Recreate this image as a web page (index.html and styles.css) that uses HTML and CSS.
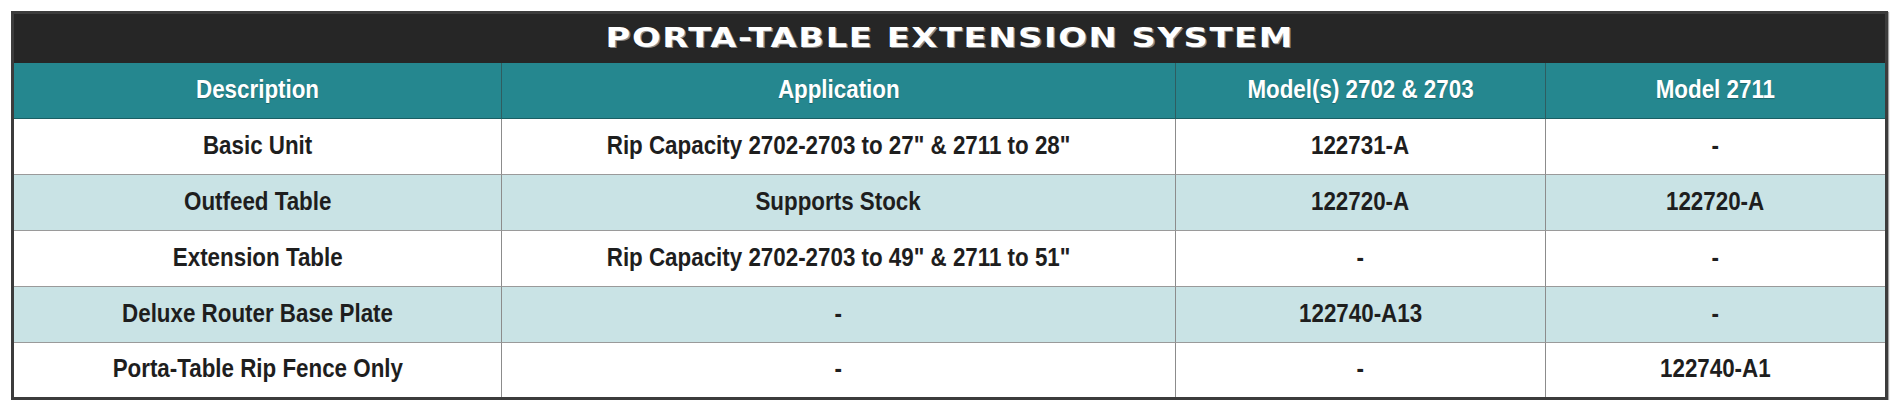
FILE: index.html
```
<!DOCTYPE html>
<html>
<head>
<meta charset="utf-8">
<link rel="stylesheet" href="styles.css">
</head>
<body>
<table class="spec">
  <colgroup>
    <col class="c1"><col class="c2"><col class="c3"><col class="c4">
  </colgroup>
  <thead>
    <tr class="title-row"><th colspan="4"><span class="title">PORTA-TABLE EXTENSION SYSTEM</span></th></tr>
    <tr class="head-row">
      <th><span class="t">Description</span></th>
      <th><span class="t">Application</span></th>
      <th><span class="t">Model(s) 2702 &amp; 2703</span></th>
      <th><span class="t">Model 2711</span></th>
    </tr>
  </thead>
  <tbody>
    <tr>
      <td><span class="t">Basic Unit</span></td>
      <td><span class="t">Rip Capacity 2702-2703 to 27" &amp; 2711 to 28"</span></td>
      <td><span class="t">122731-A</span></td>
      <td><span class="t">-</span></td>
    </tr>
    <tr class="alt">
      <td><span class="t">Outfeed Table</span></td>
      <td><span class="t">Supports Stock</span></td>
      <td><span class="t">122720-A</span></td>
      <td><span class="t">122720-A</span></td>
    </tr>
    <tr>
      <td><span class="t">Extension Table</span></td>
      <td><span class="t">Rip Capacity 2702-2703 to 49" &amp; 2711 to 51"</span></td>
      <td><span class="t">-</span></td>
      <td><span class="t">-</span></td>
    </tr>
    <tr class="alt">
      <td><span class="t">Deluxe Router Base Plate</span></td>
      <td><span class="t">-</span></td>
      <td><span class="t">122740-A13</span></td>
      <td><span class="t">-</span></td>
    </tr>
    <tr class="last">
      <td><span class="t">Porta-Table Rip Fence Only</span></td>
      <td><span class="t">-</span></td>
      <td><span class="t">-</span></td>
      <td><span class="t">122740-A1</span></td>
    </tr>
  </tbody>
</table>
</body>
</html>
```

FILE: styles.css
```
html, body {
  margin: 0;
  padding: 0;
  background: #ffffff;
}

body {
  padding: 11px 0 0 11px;
}

.spec {
  width: 1877px;
  table-layout: fixed;
  border-collapse: separate;
  border-spacing: 0;
  border: 3px solid #3c3c3c;
  box-shadow: 1px 1px 1px rgba(0, 0, 0, 0.35);
  font-family: "Liberation Sans", Arial, sans-serif;
  font-weight: bold;
}

.c1 { width: 488px; }
.c2 { width: 674px; }
.c3 { width: 370px; }
.c4 { width: 339px; }

th, td {
  padding: 0;
  text-align: center;
  vertical-align: middle;
  white-space: nowrap;
  overflow: visible;
}

.title-row th {
  height: 49px;
  background: #262626;
}

.title {
  display: inline-block;
  font-family: "DejaVu Sans", sans-serif;
  font-weight: bold;
  font-size: 26px;
  letter-spacing: 1.2px;
  color: #ffffff;
  transform: translateY(-1.5px) scaleX(1.3);
  text-shadow: 1px 1px 0 #8a8a8a;
  line-height: 26px;
}

.head-row th {
  height: 55px;
  background: #25878f;
  color: #ffffff;
  border-bottom: 1px solid #1b5f64;
  border-right: 1px solid #2f5d60;
}

.head-row th:last-child,
tbody td:last-child {
  border-right: none;
}

.t {
  display: inline-block;
  font-size: 26px;
  line-height: 26px;
  transform: translateY(-2.5px) scaleX(0.86);
}

.head-row .t {
  text-shadow: 0 1px 1px rgba(0, 0, 0, 0.25);
}

tbody td {
  height: 55px;
  background: #ffffff;
  color: #1e1e1e;
  border-bottom: 1px solid #9a9a9a;
  border-right: 1px solid #8c8c8c;
}

tbody tr.alt td {
  background: #c9e3e5;
}

tbody tr.last td {
  height: 54px;
  border-bottom: none;
}
```
